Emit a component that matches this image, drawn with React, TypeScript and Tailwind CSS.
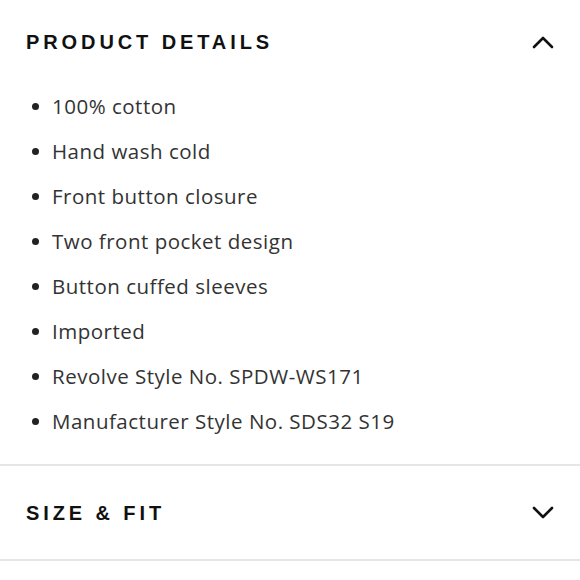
import React from 'react';

const items = [
  '100% cotton',
  'Hand wash cold',
  'Front button closure',
  'Two front pocket design',
  'Button cuffed sleeves',
  'Imported',
  'Revolve Style No. SPDW-WS171',
  'Manufacturer Style No. SDS32 S19',
];

const Chevron: React.FC<{ up?: boolean }> = ({ up }) => (
  <svg width="22" height="14" viewBox="0 0 22 14" fill="none" className="shrink-0">
    <path
      d={up ? 'M2 12 L11 3 L20 12' : 'M2 2 L11 11 L20 2'}
      stroke="#111"
      strokeWidth="2.6"
      strokeLinecap="round"
      strokeLinejoin="round"
    />
  </svg>
);

export default function App() {
  return (
    <div className="w-[580px] h-[580px] bg-white overflow-hidden font-['Open_Sans',sans-serif]">
      <section className="pt-[30px] pb-[31px]">
        <div className="flex items-center justify-between pl-[26px] pr-[26px] h-[24px]">
          <h3 className="text-[20px] font-bold tracking-[0.195em] text-[#111] font-['Liberation_Sans',sans-serif]">
            PRODUCT DETAILS
          </h3>
          <Chevron up />
        </div>
        <ul className="mt-[40px] pl-[32px] flex flex-col gap-[21px]">
          {items.map((t) => (
            <li key={t} className="flex items-center h-[24px] text-[20.5px] tracking-[0.5px] text-[#333]">
              <span className="w-[7px] h-[7px] rounded-full bg-[#222] mr-[13px]" />
              {t}
            </li>
          ))}
        </ul>
      </section>
      <div className="border-t-2 border-[#e6e6e6]" />
      <section className="flex items-center justify-between pl-[26px] pr-[26px] h-[93px]">
        <h3 className="text-[20px] font-bold tracking-[0.195em] text-[#111] font-['Liberation_Sans',sans-serif]">
          SIZE &amp; FIT
        </h3>
        <Chevron />
      </section>
      <div className="border-t-2 border-[#e6e6e6]" />
    </div>
  );
}
